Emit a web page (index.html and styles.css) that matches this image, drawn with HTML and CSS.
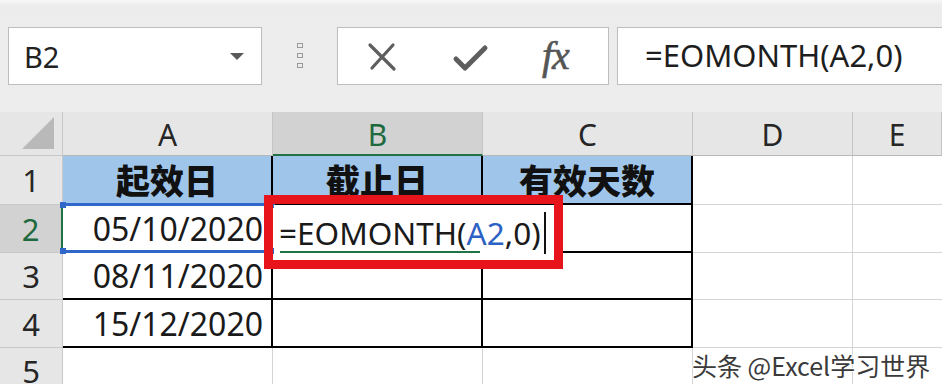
FILE: index.html
```html
<!DOCTYPE html>
<html lang="zh">
<head>
<meta charset="utf-8">
<title>EOMONTH</title>
<link rel="stylesheet" href="styles.css">
</head>
<body>
<div class="app">
  <div class="toolbar">
    <div class="namebox">
      <span class="name">B2</span>
      <svg class="dd" width="14" height="8" viewBox="0 0 14 8"><path d="M0 0H14L7 7Z" fill="#5a5a5a"/></svg>
    </div>
    <div class="grip">
      <svg width="8" height="28" viewBox="0 0 8 28"><g fill="none" stroke="#9a9a9a" stroke-width="1"><rect x="1.5" y="1.5" width="5" height="4"/><rect x="1.5" y="11.5" width="5" height="4"/><rect x="1.5" y="21.5" width="5" height="4"/></g></svg>
    </div>
    <div class="fnbox">
      <svg class="ico" width="34" height="34" viewBox="0 0 34 34"><path d="M5 6L29 30M28 6L7 29" stroke="#5e5e5e" stroke-width="3.2" stroke-linecap="round" fill="none"/></svg>
      <svg class="ico" width="38" height="34" viewBox="0 0 38 34"><path d="M4 19L13 28L33 8" stroke="#5e5e5e" stroke-width="5" stroke-linejoin="round" stroke-linecap="round" fill="none"/></svg>
      <span class="fx">fx</span>
    </div>
    <div class="formula">=EOMONTH(A2,0)</div>
  </div>

  <div class="sheet">
    <div class="corner"><svg width="32" height="32" viewBox="0 0 32 32"><path d="M32 0V32H0Z" fill="#b9b9b9"/></svg></div>
    <div class="ch">A</div>
    <div class="ch sel">B</div>
    <div class="ch">C</div>
    <div class="ch">D</div>
    <div class="ch last">E</div>

    <div class="rh">1</div>
    <div class="c head tb">起效日</div>
    <div class="c head tb">截止日</div>
    <div class="c head tb">有效天数</div>
    <div class="c"></div>
    <div class="c last"></div>

    <div class="rh rsel">2</div>
    <div class="c date tb a2">05/10/2020
      <span class="ref"><i class="h tl"></i><i class="h tr"></i><i class="h bl"></i><i class="h br"></i></span>
    </div>
    <div class="c tb"></div>
    <div class="c tb"></div>
    <div class="c"></div>
    <div class="c last"></div>

    <div class="rh">3</div>
    <div class="c date tb">08/11/2020</div>
    <div class="c tb"></div>
    <div class="c tb"></div>
    <div class="c"></div>
    <div class="c last"></div>

    <div class="rh">4</div>
    <div class="c date tb">15/12/2020</div>
    <div class="c tb"></div>
    <div class="c tb"></div>
    <div class="c"></div>
    <div class="c last"></div>

    <div class="rh r5">5</div>
    <div class="c"></div>
    <div class="c"></div>
    <div class="c"></div>
    <div class="c"></div>
    <div class="c last"></div>

    <div class="editor"><span>=EOMONTH(</span><span class="blue">A2</span><span>,0)</span><i class="caret"></i></div>
    <div class="redbox"></div>
    <div class="mark">头条 @Excel学习世界</div>
  </div>
</div>
</body>
</html>
```

FILE: styles.css
```css
* { box-sizing: border-box; }
html, body { margin: 0; padding: 0; }
body {
  width: 942px; height: 384px; overflow: hidden;
  background: #f0f0f0;
  font-family: "Noto Sans", "Open Sans", "Noto Sans CJK SC", sans-serif;
  color: #1a1a1a;
}
.app { width: 942px; height: 384px; overflow: hidden; }

.toolbar {
  height: 112px;
  padding-top: 27px;
  display: flex;
  align-items: flex-start;
  background: linear-gradient(#f7f7f7 0, #ececec 6px, #ededed 100%);
}
.namebox {
  margin-left: 8px;
  width: 254px; height: 58px;
  background: #fff;
  border: 1px solid #bdbdbd;
  display: flex; align-items: center; justify-content: space-between;
  padding: 0 17px 0 15px;
}
.name { font-size: 29px; color: #222; }
.dd { margin-top: 2px; }
.grip { width: 75px; height: 58px; display: flex; align-items: center; justify-content: center; }
.fnbox {
  width: 272px; height: 58px;
  background: #fff;
  border: 1px solid #bdbdbd;
  display: flex; align-items: center;
  padding-left: 27px;
}
.fnbox .ico:nth-child(1) { margin-right: 53px; }
.fnbox .ico:nth-child(2) { margin-right: 52px; margin-top: 2px; }
.fx {
  font-family: "Liberation Serif", "DejaVu Serif", serif;
  font-style: italic; font-weight: 400; font-size: 40px; color: #555;
  letter-spacing: -1px; margin-top: -2px;
  -webkit-text-stroke: 0.6px #555;
}
.formula {
  margin-left: 8px;
  flex: 1; height: 58px;
  background: #fff;
  border: 1px solid #bdbdbd; border-right: none;
  padding-left: 27px;
  font-size: 31px; line-height: 54px; color: #1e1e1e;
}

.sheet {
  position: relative;
  display: grid;
  grid-template-columns: 63px 210px 210px 210px 160px 89px;
  grid-template-rows: 44px 49px 48px 47px 48px 48px;
  background: #fff;
}
.corner {
  background: #e6e6e6;
  border-right: 1px solid #c8c8c8; border-bottom: 1px solid #c8c8c8;
  display: flex; align-items: flex-end; justify-content: flex-end;
  padding: 0 8px 6px 0;
}
.ch {
  background: #e6e6e6;
  border-right: 1px solid #c4c4c4; border-bottom: 1px solid #b8b8b8;
  display: flex; align-items: center; justify-content: center;
  font-size: 30px; color: #262626; padding-top: 2px;
}
.ch.sel { background: #d2d2d2; color: #1e6a3f; border-bottom: 2px solid #217346; }
.rh {
  background: #e6e6e6;
  border-right: 1px solid #c8c8c8; border-bottom: 1px solid #c8c8c8;
  display: flex; align-items: center; justify-content: center;
  font-size: 31px; color: #262626;
}
.rh.r5 { align-items: flex-start; padding-top: 2px; }
.rh.rsel { background: #d2d2d2; color: #1e6a3f; border-right: 2px solid #217346; }
.c {
  border-right: 1px solid #d4d4d4; border-bottom: 1px solid #d4d4d4;
  background: #fff;
  font-size: 32px;
  display: flex; align-items: center;
}
.c.last { border-right: none; }
.c.tb { border-right: 2px solid #000; border-bottom: 2px solid #000; }
.c.head {
  background: #9fc6ea;
  justify-content: center;
  font-family: "Noto Sans CJK SC", sans-serif;
  font-weight: 900; font-size: 34px; color: #111;
}
.c.date { justify-content: flex-end; padding-right: 8px; color: #1a1a1a; }
.a2 { position: relative; }
.ref {
  position: absolute; left: 0; right: -1px; top: -2px; bottom: -2px;
  border-top: 3px solid #2f68c8; border-bottom: 3px solid #2f68c8;
  pointer-events: none;
}
.h { position: absolute; width: 6px; height: 6px; background: #2f68c8; }
.h.tl { left: -3px; top: -4px; }
.h.tr { right: -3px; top: -4px; }
.h.bl { left: -3px; bottom: -4px; }
.h.br { right: -3px; bottom: -4px; }

.editor {
  position: absolute;
  left: 274px; top: 93px;
  width: 281px; height: 55px;
  background: #fff;
  border-right: 1px solid #9a9a9a;
  padding-left: 5px;
  font-size: 31.5px; line-height: 52px; color: #1a1a1a;
  display: flex; align-items: center;
}
.editor::after {
  content: ""; position: absolute; left: 6px; width: 200px; bottom: 7px; height: 2px; background: #217346;
}
.blue { color: #2c62c4; }
.caret { display: inline-block; width: 2px; height: 42px; background: #111; margin-left: 3px; }
.redbox {
  position: absolute;
  left: 264px; top: 83px;
  width: 299px; height: 74px;
  border: 9px solid #e8141b;
}
.mark {
  position: absolute;
  left: 692px; top: 235px;
  font-family: "Noto Sans CJK SC", sans-serif;
  font-size: 25px; color: #3a3a3a;
  text-shadow: 1px 1px 0 #fff, -1px -1px 0 #fff, 1px -1px 0 #fff, -1px 1px 0 #fff;
}
```
